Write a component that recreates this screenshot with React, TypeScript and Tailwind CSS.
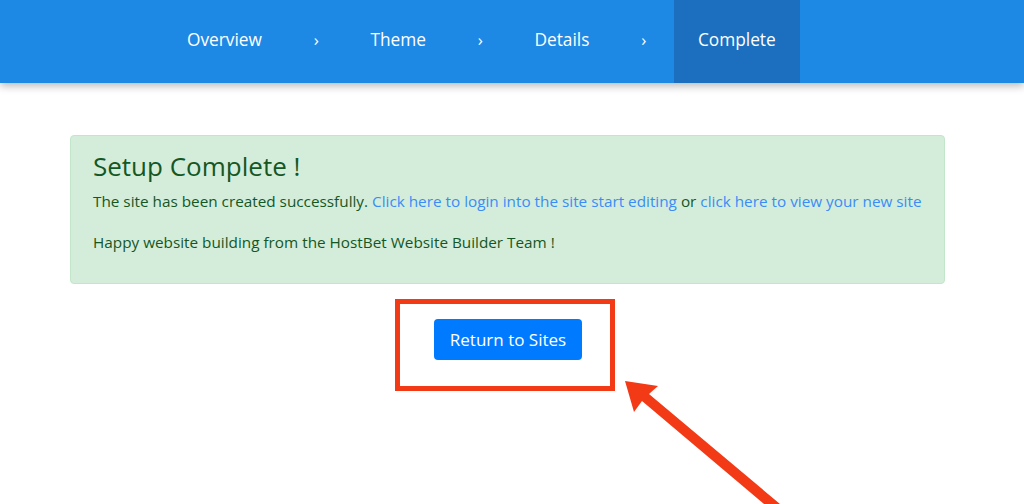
import React from "react";

const font = { fontFamily: '"Open Sans", "Noto Sans", Arial, sans-serif' };

function Sep() {
  return <div className="w-[60.5px] text-center text-[17px] text-white">›</div>;
}

export default function App() {
  return (
    <div className="relative min-h-[504px] w-full overflow-hidden bg-white" style={font}>
      <header className="relative z-10 flex h-[83px] items-stretch bg-[#1e88e5] pl-[163px] shadow-[0_3px_8px_rgba(0,0,0,0.28)]">
        <div className="flex items-center px-6 pb-[4px] text-[17.3px] text-white">Overview</div>
        <div className="flex items-center pb-[4px]"><Sep /></div>
        <div className="flex items-center px-6 pb-[4px] text-[17.3px] text-white">Theme</div>
        <div className="flex items-center pb-[4px]"><Sep /></div>
        <div className="flex items-center px-6 pb-[4px] text-[17.3px] text-white">Details</div>
        <div className="flex items-center pb-[4px]"><Sep /></div>
        <div className="flex items-center bg-[#1b6fbe] px-6 pb-[4px] text-[17.3px] text-white">Complete</div>
      </header>

      <main className="px-[70px] pt-[52px] pr-[79px]">
        <div className="h-[149px] rounded-[4px] border border-[#c3e6cb] bg-[#d4edda] px-[22px] pt-[13px] text-[#155724]">
          <h1 className="text-[26px] leading-[34px]">Setup Complete !</h1>
          <p className="mt-[7px] text-[15.3px] leading-[22px]">
            The site has been created successfully.{" "}
            <a className="text-[#3a8cf6]">Click here to login into the site start editing</a> or{" "}
            <a className="text-[#3a8cf6]">click here to view your new site</a>
          </p>
          <p className="mt-[19px] text-[15.3px] leading-[22px]">
            Happy website building from the HostBet Website Builder Team !
          </p>
        </div>

        <div className="mt-[15px] flex justify-center">
          <div className="-ml-[5px] border-[5px] border-[#f33a17] pb-[26px] pl-[34px] pr-[28px] pt-[15px]">
            <button className="flex h-[41px] w-[148px] items-center justify-center rounded-[4px] bg-[#007bff] text-[17px] text-white">
              Return to Sites
            </button>
          </div>
        </div>
      </main>

      <svg className="pointer-events-none absolute left-0 top-0" width="1024" height="504" viewBox="0 0 1024 504">
        <polygon
          points="625,381 658,386 649,394 780,504 764,504 642,401 634,412"
          fill="#f33a17"
        />
      </svg>
    </div>
  );
}
